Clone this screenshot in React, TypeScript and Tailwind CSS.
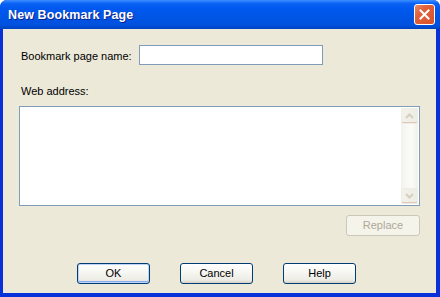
import React from 'react';

function XpButton({ label, primary = false, disabled = false }: { label: string; primary?: boolean; disabled?: boolean }) {
  if (disabled) {
    return (
      <div className="w-[74px] h-[21px] flex items-center justify-center rounded-[3px] border border-[#cac8bb] bg-[#f5f4ea] text-[11px] text-[#aca899]">
        {label}
      </div>
    );
  }
  return (
    <div
      className={
        'w-[73px] h-[21px] flex items-center justify-center rounded-[3px] border border-[#003c74] bg-[linear-gradient(180deg,#ffffff_0%,#f6f6f2_45%,#ecebe4_85%,#d6d0c5_100%)] text-[11px] text-black ' +
        (primary ? 'shadow-[inset_0_0_0_1px_#bcd4f6,inset_0_-1px_0_1px_#89adee]' : '')
      }
    >
      {label}
    </div>
  );
}

function ScrollArrow({ up }: { up: boolean }) {
  return (
    <div className="w-[17px] h-[16px] rounded-[2px] border border-[#eeede5] bg-[linear-gradient(90deg,#f3f2ea,#eeede4)] flex items-center justify-center shadow-[inset_0_-1px_0_#e2c6b3]">
      <svg width="9" height="6" viewBox="0 0 9 6">
        <path
          d={up ? 'M1 5 L4.5 1.5 L8 5' : 'M1 1 L4.5 4.5 L8 1'}
          fill="none"
          stroke="#d4cfc0"
          strokeWidth="2"
        />
      </svg>
    </div>
  );
}

export default function App() {
  return (
    <div className="w-[440px] h-[297px] bg-white font-['Liberation_Sans',Arial,sans-serif]">
      <div className="w-full h-full flex flex-col rounded-t-[7px] overflow-hidden bg-[#0831d9]">
        {/* Title bar */}
        <div className="h-[29px] shrink-0 flex items-center justify-between pl-[8px] pr-[5px] bg-[linear-gradient(180deg,#3c8fff_0%,#0a62f5_12%,#0058ee_30%,#0055e5_60%,#0052df_85%,#0043c0_100%)]">
          <span className="text-white font-bold text-[12.5px] tracking-[0.1px] [text-shadow:1px_1px_#0f1f8a] mt-[1px]">
            New Bookmark Page
          </span>
          <div className="w-[21px] h-[21px] rounded-[3px] border border-white bg-[linear-gradient(135deg,#e88a66_0%,#e0603b_35%,#d8532c_100%)] flex items-center justify-center">
            <svg width="11" height="11" viewBox="0 0 11 11">
              <path d="M1.5 1.5 L9.5 9.5 M9.5 1.5 L1.5 9.5" stroke="white" strokeWidth="2" strokeLinecap="square" />
            </svg>
          </div>
        </div>

        {/* Body */}
        <div className="flex-1 ml-[3px] mr-[4px] mb-[4px] bg-[#ece9d8] px-[16px] flex flex-col text-[11px] text-black">
          <div className="mt-[16px] h-[20px] flex items-center">
            <span className="w-[120px] pl-[2px] pt-[2px]">Bookmark page name:</span>
            <div className="w-[184px] h-[20px] border border-[#7f9db9] bg-white" />
          </div>

          <div className="mt-[20px] pl-[2px] leading-[13px]">Web address:</div>

          <div className="mt-[8px] h-[100px] border border-[#7f9db9] bg-white flex justify-end p-[1px]">
            <div className="w-[17px] h-full flex flex-col justify-between bg-[linear-gradient(90deg,#f3f3ee,#fbfbf8_60%,#f1f0ea)]">
              <ScrollArrow up />
              <ScrollArrow up={false} />
            </div>
          </div>

          <div className="mt-[9px] flex justify-end">
            <XpButton label="Replace" disabled />
          </div>

          <div className="mt-[27px] pl-[58px] flex gap-[30px]">
            <XpButton label="OK" primary />
            <XpButton label="Cancel" />
            <XpButton label="Help" />
          </div>
        </div>
      </div>
    </div>
  );
}
